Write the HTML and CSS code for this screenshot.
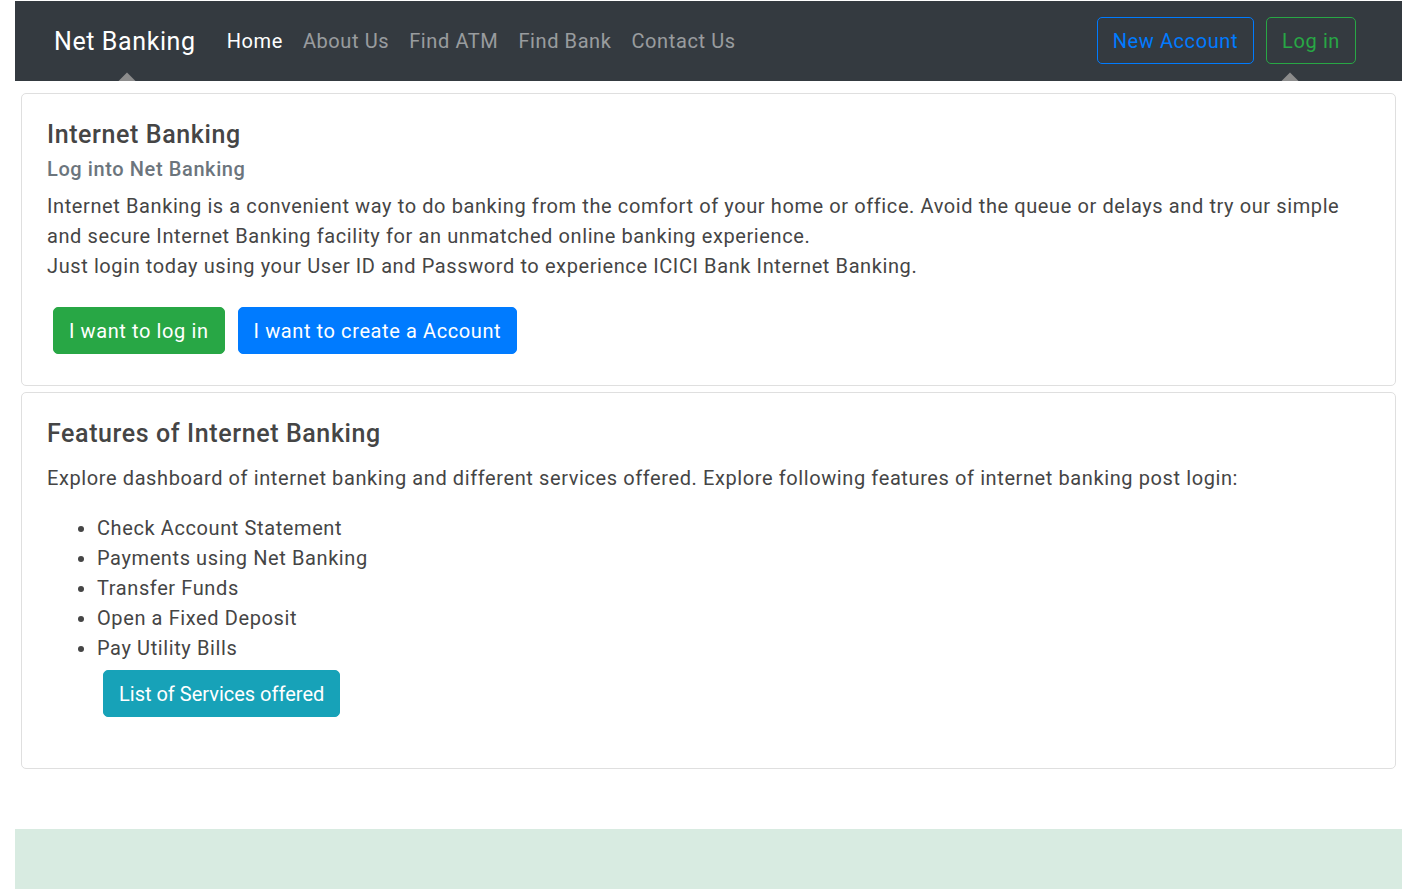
FILE: index.html
```html
<!DOCTYPE html>
<html lang="en">
<head>
<meta charset="utf-8">
<title>Net Banking</title>
<link rel="stylesheet" href="styles.css">
</head>
<body>
<div class="page">
  <nav class="navbar">
    <a class="brand" href="#">Net Banking</a>
    <ul class="nav-links">
      <li><a class="nav-link active" href="#">Home</a></li>
      <li><a class="nav-link" href="#">About Us</a></li>
      <li><a class="nav-link" href="#">Find ATM</a></li>
      <li><a class="nav-link" href="#">Find Bank</a></li>
      <li><a class="nav-link" href="#">Contact Us</a></li>
    </ul>
    <div class="nav-actions">
      <a class="btn btn-outline-primary" href="#">New Account</a>
      <a class="btn btn-outline-success" href="#">Log in</a>
    </div>
    <span class="pip pip-left"></span>
    <span class="pip pip-right"></span>
  </nav>

  <main class="content">
    <section class="card">
      <div class="card-body">
        <h5 class="card-title">Internet Banking</h5>
        <h6 class="card-subtitle">Log into Net Banking</h6>
        <p class="card-text">Internet Banking is a convenient way to do banking from the comfort of your home or office. Avoid the queue or delays and try our simple and secure Internet Banking facility for an unmatched online banking experience.<br>Just login today using your User ID and Password to experience ICICI Bank Internet Banking.</p>
        <div class="btn-row">
          <a class="btn btn-success" href="#">I want to log in</a>
          <a class="btn btn-primary" href="#">I want to create a Account</a>
        </div>
      </div>
    </section>

    <section class="card">
      <div class="card-body">
        <h5 class="card-title">Features of Internet Banking</h5>
        <p class="card-text">Explore dashboard of internet banking and different services offered. Explore following features of internet banking post login:</p>
        <ul class="features">
          <li>Check Account Statement</li>
          <li>Payments using Net Banking</li>
          <li>Transfer Funds</li>
          <li>Open a Fixed Deposit</li>
          <li>Pay Utility Bills</li>
          <li class="features-action"><a class="btn btn-info" href="#">List of Services offered</a></li>
        </ul>
      </div>
    </section>
  </main>

  <footer class="footer"></footer>
</div>
</body>
</html>
```

FILE: styles.css
```css
html {
  font-size: 20px;
}

body {
  margin: 0;
  font-family: Roboto, "Liberation Sans", sans-serif;
  font-size: 1rem;
  line-height: 1.5;
  letter-spacing: 0.6px;
  color: #454545;
  background: #fff;
}

a {
  text-decoration: none;
}

.page {
  margin: 1px 19px 0 15px;
}

.navbar {
  position: relative;
  overflow: hidden;
  display: flex;
  align-items: center;
  height: 80px;
  padding: 0 46px 0 39px;
  background: #343a40;
}

.brand {
  color: #fff;
  font-size: 25px;
  line-height: 37px;
  margin-right: 21px;
}

.nav-links {
  display: flex;
  list-style: none;
  margin: 0;
  padding: 0;
  flex: 1;
}

.nav-link {
  display: block;
  padding: 8px 10px;
  color: rgba(255, 255, 255, 0.5);
  font-size: 20px;
  line-height: 30px;
}

.nav-link.active {
  color: #fff;
}

.nav-actions {
  display: flex;
  gap: 12px;
  margin-top: -1px;
}

.pip {
  position: absolute;
  top: 74px;
  width: 12px;
  height: 12px;
  background: #8c8c8c;
  transform: rotate(45deg);
}

.pip-left {
  left: 106px;
}

.pip-right {
  left: 1269px;
}

.btn {
  display: inline-block;
  padding: 7.5px 15px;
  font-size: 20px;
  line-height: 30px;
  border: 1px solid transparent;
  border-radius: 5px;
  white-space: nowrap;
}

.btn-outline-primary {
  color: #007bff;
  border-color: #007bff;
}

.btn-outline-success {
  color: #28a745;
  border-color: #28a745;
}

.btn-success {
  color: #fff;
  background: #28a745;
  border-color: #28a745;
}

.btn-primary {
  color: #fff;
  background: #007bff;
  border-color: #007bff;
}

.btn-info {
  color: #fff;
  background: #17a2b8;
  border-color: #17a2b8;
  letter-spacing: 0;
}

.content {
  display: flex;
  flex-direction: column;
  gap: 6px;
  padding: 12px 6px 0;
}

.card {
  border: 1px solid #dfdfdf;
  border-radius: 5px;
  background: #fff;
}

.card-body {
  padding: 25px;
}

.card-title {
  margin: 0 0 14px;
  padding-top: 1px;
  font-size: 25px;
  font-weight: 500;
  line-height: 30px;
  color: #454545;
}

.card-subtitle {
  margin: -7px 0 10px;
  font-size: 20px;
  font-weight: 500;
  line-height: 24px;
  color: #6c757d;
}

.card-text {
  margin: 0 0 20px;
}

.btn-row {
  display: flex;
  gap: 13px;
  padding: 6px;
}

.features {
  margin: 0 0 20px;
  padding-left: 50px;
}

.features-action {
  list-style: none;
  padding-top: 1px;
}

.features-action .btn {
  margin: 6px;
}

.footer {
  height: 60px;
  margin-top: 60px;
  background: #d8ebe1;
}
```
